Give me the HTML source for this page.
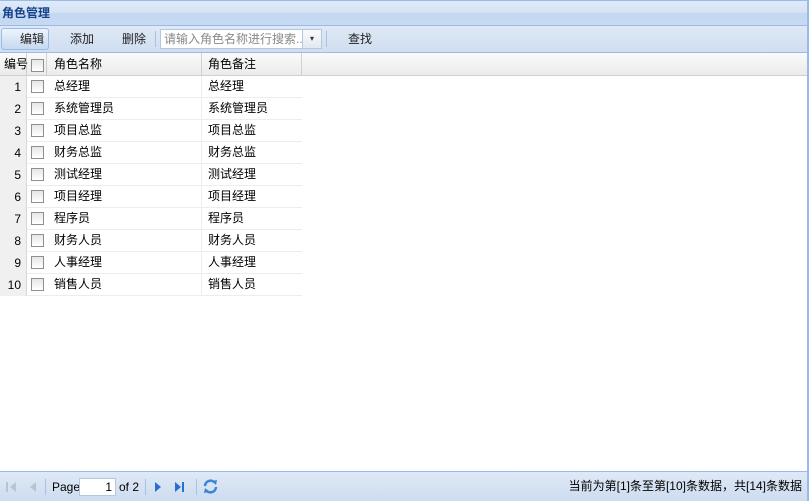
<!DOCTYPE html>
<html><head><meta charset="utf-8"><style>
*{margin:0;padding:0;box-sizing:border-box}
body{width:809px;height:501px;overflow:hidden;background:#fff;font-family:"Liberation Sans","Noto Sans CJK SC",sans-serif;font-size:12px;line-height:14px;color:#000;position:relative}
.title{position:absolute;left:0;top:0;width:809px;height:26px;background:linear-gradient(#e1ebf8 0,#d6e3f4 45%,#c3d7f1 55%,#c8daf2 100%);border-top:1px solid #99bbe8;border-bottom:1px solid #99bbe8;border-right:2px solid #99bbe8}
.title span{position:absolute;left:2px;top:5px;font-weight:bold;color:#15428b;font-size:12px;line-height:14px}
.tb{position:absolute;left:0;top:26px;width:809px;height:27px;background:linear-gradient(#dfe9f6,#d0def0);border-bottom:1px solid #99bbe8;border-right:2px solid #99bbe8}
.t{position:absolute;top:6px;color:#222}
.btn{position:absolute;left:1px;top:2px;width:48px;height:22px;border:1px solid #99bbe8;border-radius:3px;background:linear-gradient(#eef4fc,#c6d8f0)}
.sep{position:absolute;top:5px;width:1px;height:16px;background:#a9c2e2}
.inp{position:absolute;left:160px;top:3px;width:162px;height:20px;border:1px solid #b5c7e0;background:#fff;color:#888;padding:2px 3px;font-size:12px;line-height:14px;white-space:nowrap;overflow:hidden}
.dd{position:absolute;left:302px;top:3px;width:20px;height:20px;border:1px solid #b5c7e0;background:linear-gradient(#fafafa,#e3e9f2);font-size:8px;text-align:center;line-height:18px;color:#333}
.gh{position:absolute;left:0;top:53px;width:809px;height:23px;background:linear-gradient(#fafafa,#ebebeb);border-bottom:1px solid #d0d0d0;border-right:2px solid #99bbe8}
.c{position:absolute;top:0;height:100%;border-right:1px solid #d0d0d0}
.cb{position:absolute;left:31px;width:13px;height:13px;border:1px solid #8f8f8f;background:linear-gradient(#e6e6e6,#fff)}
.row{position:absolute;left:0;width:302px;height:22px;border-bottom:1px solid #ededed}
.rn{position:absolute;left:0;top:0;width:27px;height:22px;background:#f0f0f0;border-right:1px solid #d8d8d8;text-align:right;padding-right:5px;padding-top:4px}
.row .a{position:absolute;left:54px;top:3px}.row .b{position:absolute;left:208px;top:3px}
.row .d{position:absolute;left:201px;top:0;height:22px;border-left:1px solid #ededed}
.rb{position:absolute;right:0;top:26px;width:2px;height:475px;background:#99bbe8}
.ft{position:absolute;left:0;top:471px;width:809px;height:30px;background:linear-gradient(#dfe9f6,#cddcf0);border-top:1px solid #99bbe8;border-right:2px solid #99bbe8}
.pg{position:absolute;left:79px;top:6px;width:37px;height:18px;border:1px solid #b5c7e0;background:#fff;text-align:right;padding-right:3px;line-height:16px}
</style></head><body>
<div class="title"><span>角色管理</span></div>
<div class="tb">
<div class="btn"></div>
<span class="t" style="left:20px">编辑</span>
<span class="t" style="left:70px">添加</span>
<span class="t" style="left:122px">删除</span>
<div class="sep" style="left:155px"></div>
<div class="inp">请输入角色名称进行搜索...</div>
<div class="dd">▾</div>
<div class="sep" style="left:326px"></div>
<span class="t" style="left:348px">查找</span>
</div>
<div class="gh">
<div class="c" style="left:0;width:27px"></div><div class="c" style="left:27px;width:20px"></div><div class="c" style="left:47px;width:155px"></div><div class="c" style="left:202px;width:100px"></div>
<span style="position:absolute;left:4px;top:4px">编号</span>
<div class="cb" style="top:6px"></div>
<span style="position:absolute;left:54px;top:4px">角色名称</span>
<span style="position:absolute;left:208px;top:4px">角色备注</span>
</div>
<div class="row" style="top:76px"><div class="rn">1</div><div class="cb" style="top:4px"></div><span class="a">总经理</span><div class="d"></div><span class="b">总经理</span></div>
<div class="row" style="top:98px"><div class="rn">2</div><div class="cb" style="top:4px"></div><span class="a">系统管理员</span><div class="d"></div><span class="b">系统管理员</span></div>
<div class="row" style="top:120px"><div class="rn">3</div><div class="cb" style="top:4px"></div><span class="a">项目总监</span><div class="d"></div><span class="b">项目总监</span></div>
<div class="row" style="top:142px"><div class="rn">4</div><div class="cb" style="top:4px"></div><span class="a">财务总监</span><div class="d"></div><span class="b">财务总监</span></div>
<div class="row" style="top:164px"><div class="rn">5</div><div class="cb" style="top:4px"></div><span class="a">测试经理</span><div class="d"></div><span class="b">测试经理</span></div>
<div class="row" style="top:186px"><div class="rn">6</div><div class="cb" style="top:4px"></div><span class="a">项目经理</span><div class="d"></div><span class="b">项目经理</span></div>
<div class="row" style="top:208px"><div class="rn">7</div><div class="cb" style="top:4px"></div><span class="a">程序员</span><div class="d"></div><span class="b">程序员</span></div>
<div class="row" style="top:230px"><div class="rn">8</div><div class="cb" style="top:4px"></div><span class="a">财务人员</span><div class="d"></div><span class="b">财务人员</span></div>
<div class="row" style="top:252px"><div class="rn">9</div><div class="cb" style="top:4px"></div><span class="a">人事经理</span><div class="d"></div><span class="b">人事经理</span></div>
<div class="row" style="top:274px"><div class="rn">10</div><div class="cb" style="top:4px"></div><span class="a">销售人员</span><div class="d"></div><span class="b">销售人员</span></div>
<div class="rb"></div>
<div class="ft">
<svg style="position:absolute;left:4px;top:8px" width="40" height="14"><rect x="2" y="2" width="2" height="10" fill="#b8c4d4"/><path d="M12 2 L6 7 L12 12Z" fill="#b8c4d4"/><path d="M32 2 L26 7 L32 12Z" fill="#b8c4d4"/></svg>
<div class="sep" style="left:45px;top:7px"></div>
<span style="position:absolute;left:52px;top:8px">Page</span>
<div class="pg">1</div>
<span style="position:absolute;left:119px;top:8px">of 2</span>
<div class="sep" style="left:145px;top:7px"></div>
<svg style="position:absolute;left:152px;top:8px" width="40" height="14"><path d="M3 2 L9 7 L3 12Z" fill="#2a6fd0"/><path d="M23 2 L29 7 L23 12Z" fill="#2a6fd0"/><rect x="30" y="2" width="2" height="10" fill="#2a6fd0"/></svg>
<div class="sep" style="left:196px;top:7px"></div>
<svg style="position:absolute;left:202px;top:6px" width="17" height="17"><path d="M3 8 A5.5 5.5 0 0 1 13 5" stroke="#3a84d8" stroke-width="2.5" fill="none"/><path d="M14 9 A5.5 5.5 0 0 1 4 12" stroke="#3a84d8" stroke-width="2.5" fill="none"/><path d="M10 3 L15 2 L14 7Z" fill="#3a84d8"/><path d="M7 14 L2 15 L3 10Z" fill="#3a84d8"/></svg>
<span style="position:absolute;right:5px;top:7px">当前为第[1]条至第[10]条数据，共[14]条数据</span>
</div>
</body></html>
